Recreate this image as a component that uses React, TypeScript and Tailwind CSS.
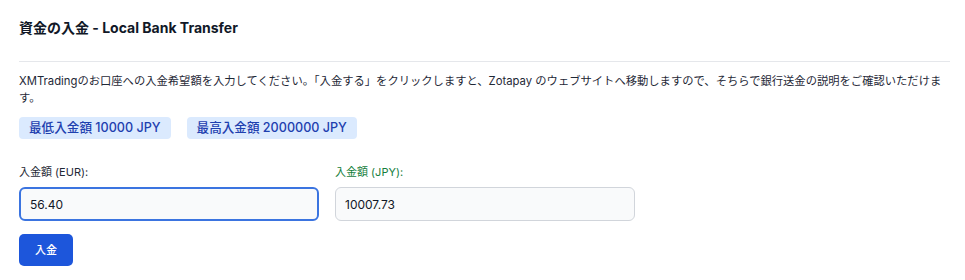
import React, { useState } from 'react';

const font = { fontFamily: 'Inter, "Noto Sans CJK JP", sans-serif' };

export default function App() {
  const [eur, setEur] = useState('56.40');

  return (
    <div className="bg-white w-[965px] h-[280px] pl-[19px] pr-[15px] text-[#111827]" style={font}>
      <h2 className="pt-[18px] pb-[23px] text-[14px] font-bold leading-[20px] border-b border-[#e5e7eb]">
        資金の入金 - Local Bank Transfer
      </h2>
      <p className="mt-[11px] text-[11.3px] leading-[17px] text-[#1f2937]">
        XMTradingのお口座への入金希望額を入力してください。「入金する」をクリックしますと、Zotapay のウェブサイトへ移動しますので、そちらで銀行送金の説明をご確認いただけます。
      </p>
      <div className="flex gap-[16px] mt-[10px]">
        <span className="px-[10px] h-[22px] flex items-center rounded-[4px] bg-[#dbeafe] text-[#1e40af] text-[12.6px] font-medium">
          最低入金額 10000 JPY
        </span>
        <span className="px-[10px] h-[22px] flex items-center rounded-[4px] bg-[#dbeafe] text-[#1e40af] text-[12.6px] font-medium">
          最高入金額 2000000 JPY
        </span>
      </div>
      <div className="flex gap-[16px] mt-[25px]">
        <div className="w-[300px]">
          <label className="block text-[11px] leading-[16px] text-[#1f2937]">入金額 (EUR):</label>
          <input
            autoFocus
            value={eur}
            onChange={(e) => setEur(e.target.value)}
            className="mt-[7px] w-full h-[34px] px-[9px] text-[12px] rounded-[6px] border-2 border-[#3b74e0] bg-[#f9fafb] outline-none"
          />
        </div>
        <div className="w-[300px]">
          <label className="block text-[11px] leading-[16px] text-[#15803d]">入金額 (JPY):</label>
          <input
            readOnly
            value="10007.73"
            className="mt-[7px] w-full h-[34px] px-[9px] text-[12px] rounded-[6px] border border-[#d1d5db] bg-[#f9fafb] outline-none"
          />
        </div>
      </div>
      <button className="mt-[13px] w-[54px] h-[32px] rounded-[5px] bg-[#1d56db] text-white text-[11px] font-medium">
        入金
      </button>
    </div>
  );
}
